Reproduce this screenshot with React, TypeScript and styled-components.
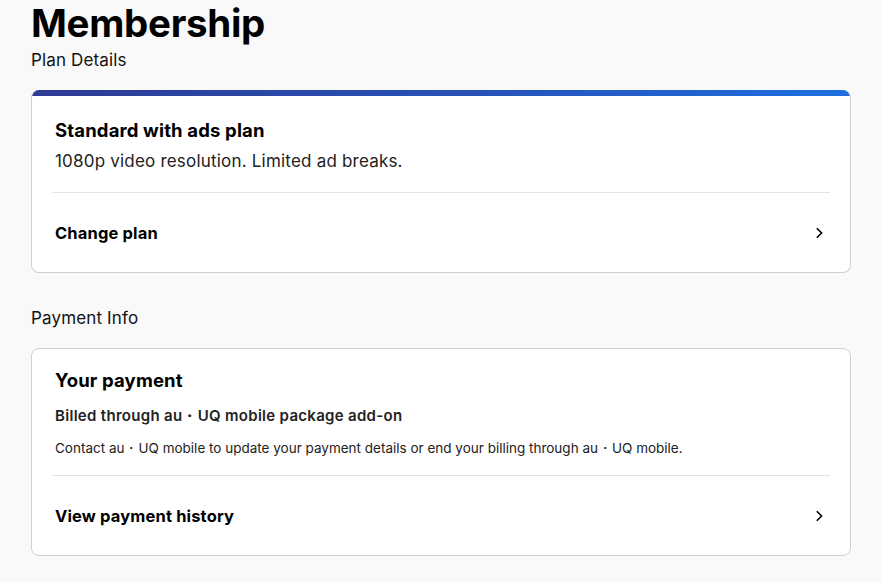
import styled, { createGlobalStyle } from 'styled-components'

const GlobalStyle = createGlobalStyle`
  html, body {
    margin: 0;
    padding: 0;
    background: #f9f9f9;
  }
  body {
    font-family: Inter, "Noto Sans", "Liberation Sans", sans-serif;
    color: #000;
  }
`

const Page = styled.main`
  padding: 0 30px 24px 31px;
  max-width: 820px;
`

const Title = styled.h1`
  margin: 0;
  font-size: 38.5px;
  line-height: 46px;
  font-weight: 700;
  letter-spacing: -0.3px;
`

const SectionLabel = styled.h2<{ $gap?: number }>`
  margin: ${props => props.$gap ?? 0}px 0 0 0;
  font-size: 17px;
  line-height: 28px;
  font-weight: 400;
  letter-spacing: 0.15px;
  color: #111;
`

const Card = styled.section<{ $accent?: boolean }>`
  margin-top: 16px;
  background: #fff;
  border: 1px solid #cfcfcf;
  border-radius: 8px;
  overflow: hidden;
  ${props => props.$accent && `
    border-top: none;
    &::before {
      content: '';
      display: block;
      height: 6px;
      background: linear-gradient(90deg, #2d3b93 0%, #2752b8 55%, #1d6fe0 100%);
    }
  `}
`

const CardBody = styled.div`
  padding: 0 20px;
`

const Header = styled.div<{ $top?: number; $bottom?: number }>`
  padding: ${props => props.$top ?? 20}px 3px ${props => props.$bottom ?? 19}px;
`

const CardTitle = styled.h3`
  margin: 0;
  font-size: 18.5px;
  line-height: 28px;
  font-weight: 700;
  letter-spacing: 0.15px;
`

const Description = styled.p`
  margin: 5px 0 0;
  font-size: 17px;
  line-height: 24px;
  letter-spacing: 0.2px;
  color: #222;
`

const Billed = styled.p`
  margin: 12px 0 0;
  font-size: 15px;
  line-height: 20px;
  font-weight: 600;
  letter-spacing: 0.3px;
  color: #222;
`

const Note = styled.p`
  margin: 12px 0 0;
  font-size: 13.5px;
  line-height: 20px;
  color: #222;
`

const Divider = styled.hr`
  margin: 0;
  border: none;
  border-top: 1px solid #e4e4e4;
`

const LinkRow = styled.a`
  display: flex;
  align-items: center;
  justify-content: space-between;
  height: 79px;
  padding: 0 3px;
  font-size: 16.5px;
  font-weight: 700;
  letter-spacing: 0.15px;
  color: #000;
  text-decoration: none;
  cursor: pointer;
`

const Chevron = () => (
  <svg width="16" height="16" viewBox="0 0 16 16" fill="none">
    <path d="M5.8 3.2 L10.6 8 L5.8 12.8" stroke="#000" strokeWidth="1.6" />
  </svg>
)

const App = () => (
  <>
    <GlobalStyle />
    <Page>
      <Title>Membership</Title>
      <SectionLabel>Plan Details</SectionLabel>
      <Card $accent>
        <CardBody>
          <Header>
            <CardTitle>Standard with ads plan</CardTitle>
            <Description>1080p video resolution. Limited ad breaks.</Description>
          </Header>
          <Divider />
          <LinkRow>
            Change plan
            <Chevron />
          </LinkRow>
        </CardBody>
      </Card>
      <SectionLabel $gap={31}>Payment Info</SectionLabel>
      <Card>
        <CardBody>
          <Header $top={17} $bottom={17}>
            <CardTitle>Your payment</CardTitle>
            <Billed>Billed through au・UQ mobile package add-on</Billed>
            <Note>
              Contact au・UQ mobile to update your payment details or end your billing through au・UQ mobile.
            </Note>
          </Header>
          <Divider />
          <LinkRow>
            View payment history
            <Chevron />
          </LinkRow>
        </CardBody>
      </Card>
    </Page>
  </>
)

export default App
